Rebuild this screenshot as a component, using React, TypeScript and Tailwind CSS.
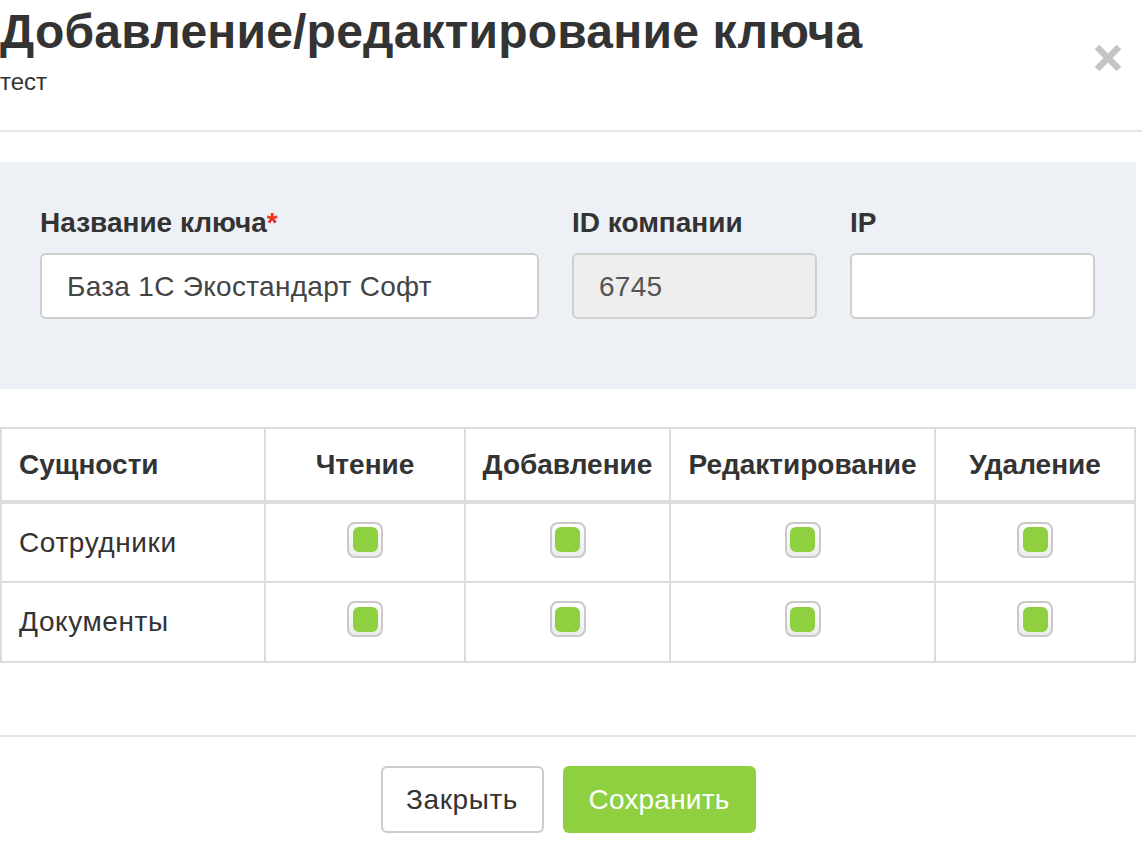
import { useState } from "react";

const columns = ["Чтение", "Добавление", "Редактирование", "Удаление"];
const entities = ["Сотрудники", "Документы"];

function Check({ checked, onClick }: { checked: boolean; onClick: () => void }) {
    return (
        <div
            onClick={onClick}
            className="w-[36px] h-[36px] border-2 border-[#c9c9c9] rounded-[8px] bg-gradient-to-b from-white to-[#ececec] flex items-center justify-center cursor-pointer mx-auto mb-[6px]"
        >
            {checked && <div className="w-[25px] h-[25px] rounded-[6px] bg-[#8ed03f]" />}
        </div>
    );
}

export default function App() {
    const [rights, setRights] = useState<boolean[][]>(entities.map(() => columns.map(() => true)));

    const toggle = (r: number, c: number) => {
        setRights(rights.map((row, i) => (i === r ? row.map((v, j) => (j === c ? !v : v)) : row)));
    };

    return (
        <div className="w-[1142px] h-[854px] bg-white text-[#333] font-['Liberation_Sans',Arial,sans-serif] overflow-hidden">
            {/* header */}
            <div className="flex justify-between border-b-2 border-[#e6e6e6] h-[132px]">
                <div>
                    <h1 className="text-[48px] font-bold leading-[56px] mt-[4px] tracking-[0.2px]">Добавление/редактирование ключа</h1>
                    <p className="text-[24px] leading-[28px] mt-[8px]">тест</p>
                </div>
                <button className="mt-[43px] mr-[19px] w-[30px] h-[30px] cursor-pointer">
                    <svg viewBox="0 0 30 30" className="w-[30px] h-[30px]">
                        <path d="M4 4L26 26M26 4L4 26" stroke="#c4c4c4" strokeWidth="6.5" strokeLinecap="butt" />
                    </svg>
                </button>
            </div>

            <div className="w-[1136px] pt-[30px]">
                {/* fields */}
                <div className="bg-[#edf0f4] h-[227px] px-[40px] pt-[45px] flex gap-[33px]">
                    <div className="w-[499px]">
                        <label className="block text-[28px] font-bold leading-[32px] mb-[14px]">
                            Название ключа<span className="text-[#e8321e]">*</span>
                        </label>
                        <input
                            defaultValue="База 1С Экостандарт Софт"
                            className="w-full h-[66px] bg-white border-2 border-[#cfcfcf] rounded-[6px] px-[25px] pt-[2px] text-[28px] tracking-[0.3px] text-[#444] outline-none"
                        />
                    </div>
                    <div className="w-[245px]">
                        <label className="block text-[28px] font-bold leading-[32px] mb-[14px]">ID компании</label>
                        <input
                            defaultValue="6745"
                            disabled
                            className="w-full h-[66px] bg-[#eeeeee] border-2 border-[#cfcfcf] rounded-[6px] px-[25px] pt-[2px] text-[28px] tracking-[0.3px] text-[#555] outline-none"
                        />
                    </div>
                    <div className="w-[245px]">
                        <label className="block text-[28px] font-bold leading-[32px] mb-[14px]">IP</label>
                        <input className="w-full h-[66px] bg-white border-2 border-[#cfcfcf] rounded-[6px] px-[25px] text-[28px] outline-none" />
                    </div>
                </div>

                {/* rights table */}
                <table className="w-full mt-[38px] border-collapse border-2 border-[#dddddd]">
                    <thead>
                        <tr className="h-[74px] border-b-4 border-[#dddddd]">
                            <th className="w-[264px] text-left px-[17px] text-[28px] font-bold border-2 border-[#dddddd]">Сущности</th>
                            <th className="w-[200px] text-[28px] font-bold border-2 border-[#dddddd]">{columns[0]}</th>
                            <th className="w-[205px] text-[28px] font-bold border-2 border-[#dddddd]">{columns[1]}</th>
                            <th className="w-[265px] text-[28px] font-bold border-2 border-[#dddddd]">{columns[2]}</th>
                            <th className="text-[28px] font-bold border-2 border-[#dddddd]">{columns[3]}</th>
                        </tr>
                    </thead>
                    <tbody>
                        {entities.map((name, r) => (
                            <tr key={name} className="h-[80px]">
                                <td className="px-[17px] text-[28px] tracking-[0.6px] border-2 border-[#dddddd]">{name}</td>
                                {columns.map((col, c) => (
                                    <td key={col} className="border-2 border-[#dddddd]">
                                        <Check checked={rights[r][c]} onClick={() => toggle(r, c)} />
                                    </td>
                                ))}
                            </tr>
                        ))}
                    </tbody>
                </table>

                {/* footer */}
                <div className="mt-[72px] border-t-2 border-[#e6e6e6] pt-[29px] flex justify-center gap-[19px]">
                    <button className="w-[163px] h-[67px] border-2 border-[#cccccc] rounded-[6px] bg-white text-[28px] tracking-[0.6px] text-[#333] cursor-pointer">
                        Закрыть
                    </button>
                    <button className="w-[193px] h-[67px] rounded-[6px] bg-[#8ed03f] text-[28px] tracking-[0.2px] text-white cursor-pointer">
                        Сохранить
                    </button>
                </div>
            </div>
        </div>
    );
}
